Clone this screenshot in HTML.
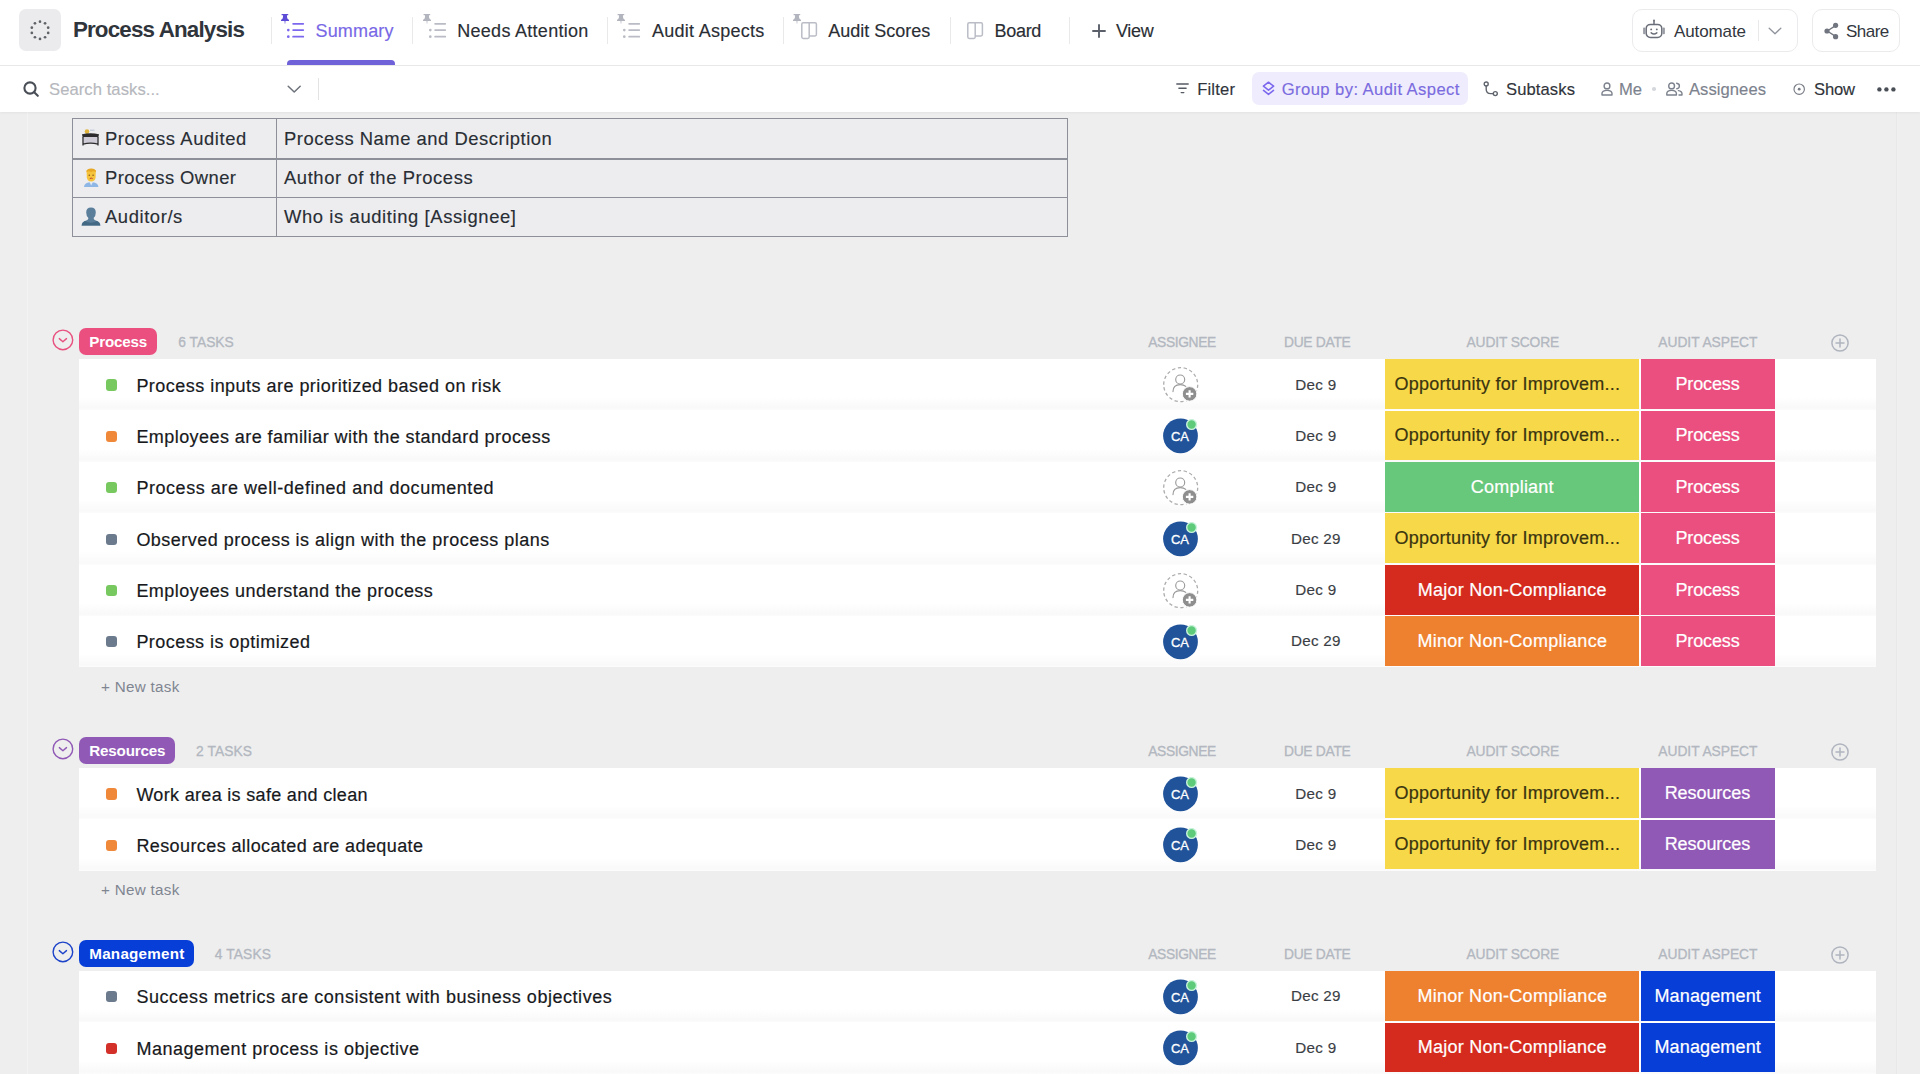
<!DOCTYPE html>
<html lang="en">
<head>
<meta charset="utf-8">
<title>Process Analysis</title>
<style>
*{box-sizing:border-box;margin:0;padding:0}
html,body{width:1920px;height:1074px;overflow:hidden;background:#eeeeee}
body{font-family:"Liberation Sans",Arial,sans-serif;color:#292d34;position:relative}
.abs{position:absolute}
svg{position:absolute;overflow:visible}
.t{position:absolute;white-space:nowrap;line-height:1}
#top{position:absolute;left:0;top:0;width:1920px;height:66px;background:#fff;border-bottom:1px solid #e9e9e9}
#bar{position:absolute;left:0;top:66px;width:1920px;height:45.6px;background:#fff;box-shadow:0 1px 2.5px rgba(0,0,0,.05)}
#lline{position:absolute;left:26.6px;top:112px;width:1.6px;height:962px;background:#f3f3f3}
#rline{position:absolute;left:1896.2px;top:112px;width:5px;height:962px;background:linear-gradient(90deg,#e8e8e8 0,#e8e8e8 1.2px,#f0f0f0 1.2px,#eee 100%)}
.title{font-size:22.4px;font-weight:700;color:#30343b}
.tab{font-size:18px;color:#2a2e34;-webkit-text-stroke:.15px}
.tab.on{color:#7868e6}
.btn{font-size:17px;color:#33373e}
.vsep{position:absolute;width:1px;background:#e9e9e9;top:17px;height:27px}
.tool{font-size:16.6px;color:#30343a;-webkit-text-stroke:.15px}
.tool.gr{color:#7c828d}
.tool.pl{color:#b6b8bd}
.tool.vi{color:#7a6be0}
.row{position:absolute;left:79px;width:1797px;height:51.4px;background:linear-gradient(#fff 0,#fff 74%,#f9f9f9 96%,#fcfcfc 100%)}
.sq{position:absolute;left:27.1px;top:20.4px;width:11px;height:11.2px;border-radius:3px}
.name{font-size:18px;color:#17191c;-webkit-text-stroke:.2px #17191c}
.date{font-size:15.2px;color:#3a3e44;-webkit-text-stroke:.15px}
.cell{position:absolute;top:.3px;height:49.8px}
.sc{left:1306.2px;width:254.1px}
.as{left:1561.8px;width:134.1px}
.ct{font-size:18px;color:#fff;-webkit-text-stroke:.2px}
.y .ct{color:#3a3410}
.y{background:#f6d848}
.g{background:#67c87b}
.r{background:#d52b1e}
.o{background:#ee8130}
.pk{background:#ea4f80}.pu{background:#9159b6}.bl{background:#083ed8}
.av{left:1083.6px;top:8.1px}
.ghead{font-size:13.8px;color:#b2b7c0;-webkit-text-stroke:.3px #b2b7c0}
.badge{position:absolute;left:79.2px;height:27px;border-radius:7px}
.bt{font-size:15.2px;font-weight:700;color:#fff}
.newt{font-size:15.2px;color:#7f8591}
#tbl{position:absolute;left:72.3px;top:118.2px;width:996.2px;height:118.8px;background:#ededf0;border:1.8px solid #8d9099}
#tbl .h{position:absolute;left:0;width:100%;height:1.8px;background:#8d9099}
#tbl .v{position:absolute;top:0;height:100%;width:1.8px;left:202.4px;background:#8d9099}
.tc{font-size:18.4px;color:#292d34;-webkit-text-stroke:.15px}
</style>
</head>
<body>
<div id="lline"></div><div id="rline"></div>
<div id="top">
<div class="abs" style="left:19px;top:9px;width:42px;height:42px;border-radius:7px;background:#ebebed"></div>
<svg style="left:0;top:0" width="80" height="60" fill="#5f6368"><circle cx="40.00" cy="21.70" r="1.35"/><circle cx="45.05" cy="23.34" r="1.35"/><circle cx="48.18" cy="27.64" r="1.35"/><circle cx="48.18" cy="32.96" r="1.35"/><circle cx="45.05" cy="37.26" r="1.35"/><circle cx="40.00" cy="38.90" r="1.35"/><circle cx="34.95" cy="37.26" r="1.35"/><circle cx="31.82" cy="32.96" r="1.35"/><circle cx="31.82" cy="27.64" r="1.35"/><circle cx="34.95" cy="23.34" r="1.35"/></svg>
<div class="t title" style="left:72.9px;top:19.3px;letter-spacing:-0.84px">Process Analysis</div>
<svg style="left:280.8px;top:14.3px" width="8" height="10" fill="#5b4bd6"><path d="M0.6 0 H7.2 V1.3 H5.9 L6.2 4.2 L8 6 V6.9 H4.5 L4.2 9.8 H3.8 L3.5 6.9 H0 V6 L1.8 4.2 L2.1 1.3 H0.6 Z"/></svg>
<svg style="left:287px;top:23.2px" width="20" height="16" fill="none" stroke="#7b68ee" stroke-width="1.7" stroke-linecap="round"><path d="M6.1 0.8 H16.3"/><path d="M6.1 7.1 H16.3"/><circle cx="1.3" cy="7.1" r="1.35" fill="#7b68ee" stroke="none"/><path d="M6.1 13.7 H16.3"/><circle cx="1.3" cy="13.7" r="1.35" fill="#7b68ee" stroke="none"/></svg>
<div class="t tab on" style="left:315.5px;top:21.8px;letter-spacing:0.16px">Summary</div>
<div class="abs" style="left:287px;top:60px;width:107.5px;height:5px;border-radius:4px 4px 0 0;background:#6f62d8"></div>
<div class="vsep" style="left:270.5px"></div>
<div class="vsep" style="left:412px"></div>
<div class="vsep" style="left:607px"></div>
<div class="vsep" style="left:783px"></div>
<div class="vsep" style="left:949.8px"></div>
<div class="vsep" style="left:1069px"></div>
<svg style="left:423px;top:14.3px" width="8" height="10" fill="#b2b4be"><path d="M0.6 0 H7.2 V1.3 H5.9 L6.2 4.2 L8 6 V6.9 H4.5 L4.2 9.8 H3.8 L3.5 6.9 H0 V6 L1.8 4.2 L2.1 1.3 H0.6 Z"/></svg>
<svg style="left:429px;top:23.2px" width="20" height="16" fill="none" stroke="#babcc5" stroke-width="1.7" stroke-linecap="round"><path d="M6.1 0.8 H16.3"/><path d="M6.1 7.1 H16.3"/><circle cx="1.3" cy="7.1" r="1.35" fill="#babcc5" stroke="none"/><path d="M6.1 13.7 H16.3"/><circle cx="1.3" cy="13.7" r="1.35" fill="#babcc5" stroke="none"/></svg>
<div class="t tab" style="left:457.2px;top:21.8px;letter-spacing:0.29px">Needs Attention</div>
<svg style="left:617px;top:14.3px" width="8" height="10" fill="#b2b4be"><path d="M0.6 0 H7.2 V1.3 H5.9 L6.2 4.2 L8 6 V6.9 H4.5 L4.2 9.8 H3.8 L3.5 6.9 H0 V6 L1.8 4.2 L2.1 1.3 H0.6 Z"/></svg>
<svg style="left:623px;top:23.2px" width="20" height="16" fill="none" stroke="#babcc5" stroke-width="1.7" stroke-linecap="round"><path d="M6.1 0.8 H16.3"/><path d="M6.1 7.1 H16.3"/><circle cx="1.3" cy="7.1" r="1.35" fill="#babcc5" stroke="none"/><path d="M6.1 13.7 H16.3"/><circle cx="1.3" cy="13.7" r="1.35" fill="#babcc5" stroke="none"/></svg>
<div class="t tab" style="left:652.0px;top:21.8px;letter-spacing:0.27px">Audit Aspects</div>
<svg style="left:793.2px;top:14.3px" width="8" height="10" fill="#b2b4be"><path d="M0.6 0 H7.2 V1.3 H5.9 L6.2 4.2 L8 6 V6.9 H4.5 L4.2 9.8 H3.8 L3.5 6.9 H0 V6 L1.8 4.2 L2.1 1.3 H0.6 Z"/></svg>
<svg style="left:800.5px;top:22.1px" width="17" height="17" fill="none" stroke="#bbbdc6" stroke-width="1.5" stroke-linejoin="round"><path d="M.8 2.2 a1.4 1.4 0 0 1 1.4 -1.4 H14 a1.4 1.4 0 0 1 1.4 1.4 V12.6 a1.4 1.4 0 0 1 -1.4 1.4 H8.2 V15 a1.4 1.4 0 0 1 -1.4 1.4 H2.2 a1.4 1.4 0 0 1 -1.4 -1.4 Z M8.2 .8 V14"/></svg>
<div class="t tab" style="left:828.2px;top:21.8px;letter-spacing:0.00px">Audit Scores</div>
<svg style="left:966.6px;top:22.1px" width="17" height="17" fill="none" stroke="#bbbdc6" stroke-width="1.5" stroke-linejoin="round"><path d="M.8 2.2 a1.4 1.4 0 0 1 1.4 -1.4 H14 a1.4 1.4 0 0 1 1.4 1.4 V12.6 a1.4 1.4 0 0 1 -1.4 1.4 H8.2 V15 a1.4 1.4 0 0 1 -1.4 1.4 H2.2 a1.4 1.4 0 0 1 -1.4 -1.4 Z M8.2 .8 V14"/></svg>
<div class="t tab" style="left:994.5px;top:21.8px;letter-spacing:-0.29px">Board</div>
<svg style="left:1092.3px;top:23.6px" width="14" height="14" stroke="#5a5f69" stroke-width="1.9" stroke-linecap="round"><path d="M7 1 V13 M1 7 H13"/></svg>
<div class="t tab" style="left:1115.9px;top:21.8px;letter-spacing:-0.27px">View</div>
<div class="abs" style="left:1631.5px;top:9px;width:166.5px;height:43px;border:1px solid #ebebee;border-radius:10px"></div>
<svg style="left:1642px;top:18px" width="24" height="24" fill="none" stroke="#6a6e78" stroke-width="1.5" stroke-linecap="round" stroke-linejoin="round"><rect x="4.2" y="6.4" width="15.6" height="13" rx="4.2"/><path d="M12 6.2 V3.4"/><circle cx="12" cy="2.5" r="1" fill="#6a6e78" stroke="none"/><rect x="1.1" y="9.6" width="2.2" height="6.6" rx=".8" fill="#9a9da5" stroke="none"/><rect x="20.7" y="9.6" width="2.2" height="6.6" rx=".8" fill="#9a9da5" stroke="none"/><circle cx="9.2" cy="11.4" r=".95" fill="#6a6e78" stroke="none"/><circle cx="14.8" cy="11.4" r=".95" fill="#6a6e78" stroke="none"/><path d="M9.2 14.8 Q12 17 14.8 14.8"/></svg>
<div class="t btn" style="left:1674.0px;top:22.6px;letter-spacing:-0.11px">Automate</div>
<div class="abs" style="left:1758.2px;top:20px;width:1px;height:21px;background:#e9e9ec"></div>
<svg style="left:1768px;top:26.8px" width="14" height="9" fill="none" stroke="#8f939c" stroke-width="1.3" stroke-linecap="round" stroke-linejoin="round"><path d="M1.2 1.2 L7 6.8 L12.8 1.2"/></svg>
<div class="abs" style="left:1812px;top:9px;width:88px;height:43px;border:1px solid #ebebee;border-radius:10px"></div>
<svg style="left:1823.5px;top:21.5px" width="16" height="18" fill="#71757f" stroke="#71757f" stroke-width="1.4"><path d="M3.2 9 L11.6 3.6 M3.2 9 L11.6 14.4" fill="none"/><circle cx="3" cy="9" r="2.6" stroke="none"/><circle cx="11.6" cy="3.3" r="2.6" stroke="none"/><circle cx="11.6" cy="14.7" r="2.6" stroke="none"/></svg>
<div class="t btn" style="left:1846.0px;top:22.6px;letter-spacing:-0.52px">Share</div>
</div>
<div id="bar"></div>
<svg style="left:23px;top:80.5px" width="17" height="17" fill="none" stroke="#4a4f57" stroke-width="2.1" stroke-linecap="round"><circle cx="7" cy="7" r="5.6"/><path d="M11.2 11.2 L14.8 14.8"/></svg>
<div class="t tool pl" style="left:49.0px;top:81.9px;letter-spacing:0.07px">Search tasks...</div>
<svg style="left:287px;top:84.5px" width="15" height="9" fill="none" stroke="#6d727b" stroke-width="1.5" stroke-linecap="round" stroke-linejoin="round"><path d="M1.2 1.2 L7.2 7 L13.2 1.2"/></svg>
<div class="abs" style="left:317.5px;top:78px;width:1px;height:22px;background:#e3e3e3"></div>
<svg style="left:1175.5px;top:83.2px" width="13" height="11" fill="none" stroke="#555a63" stroke-width="1.4" stroke-linecap="round"><path d="M.8 1 H12.2 M2.9 5.3 H10.1 M5.2 9.6 H7.8"/></svg>
<div class="t tool" style="left:1197.2px;top:81.9px;letter-spacing:0.17px">Filter</div>
<div class="abs" style="left:1251.5px;top:72.3px;width:216.5px;height:32.3px;border-radius:7px;background:#efedfd"></div>
<svg style="left:1261.5px;top:81px" width="13" height="15" fill="none" stroke="#7b68ee" stroke-width="1.55" stroke-linejoin="round" stroke-linecap="round"><path d="M6.5 1.2 L11.6 5.2 L6.5 9.2 L1.4 5.2 Z"/><path d="M1.5 9.4 L6.5 13.4 L11.5 9.4"/></svg>
<div class="t tool vi" style="left:1281.8px;top:81.9px;letter-spacing:0.42px">Group by: Audit Aspect</div>
<svg style="left:1483px;top:81px" width="16" height="16" fill="none" stroke="#5f646d" stroke-width="1.4" stroke-linecap="round"><circle cx="3.2" cy="3" r="2"/><circle cx="12.3" cy="12.6" r="2"/><path d="M3.2 5 V8.2 Q3.2 12.6 7.6 12.6 H10.3"/></svg>
<div class="t tool" style="left:1506.0px;top:81.9px;letter-spacing:0.10px">Subtasks</div>
<svg style="left:1600.5px;top:81.5px" width="12" height="14" fill="none" stroke="#7c828d" stroke-width="1.4" stroke-linejoin="round"><circle cx="6" cy="3.9" r="2.9"/><path d="M1 13 V11.6 Q1 8.4 6 8.4 Q11 8.4 11 11.6 V13 Z"/></svg>
<div class="t tool gr" style="left:1619.0px;top:81.9px;letter-spacing:-0.06px">Me</div>
<div class="abs" style="left:1652.3px;top:87px;width:3.6px;height:3.6px;border-radius:50%;background:#d5d8dd"></div>
<svg style="left:1665.5px;top:81.5px" width="17" height="14" fill="none" stroke="#7c828d" stroke-width="1.4" stroke-linejoin="round" stroke-linecap="round"><circle cx="5.6" cy="3.9" r="2.9"/><path d="M.8 13 V11.6 Q.8 8.4 5.6 8.4 Q10.4 8.4 10.4 11.6 V13 Z"/><path d="M10.6 1.2 Q13.4 1.6 13.4 3.9 Q13.4 6.2 10.8 6.7"/><path d="M12.4 8.6 Q16 9.2 16 11.8 V13 H13"/></svg>
<div class="t tool gr" style="left:1689.0px;top:81.9px;letter-spacing:0.05px">Assignees</div>
<svg style="left:1793.4px;top:83px" width="13" height="13" fill="none" stroke="#777c85" stroke-width="1.15"><circle cx="6.2" cy="6.2" r="5.2"/><circle cx="6.2" cy="6.2" r="1.4" fill="#777c85" stroke="none"/></svg>
<div class="t tool" style="left:1814.0px;top:81.9px;letter-spacing:-0.17px">Show</div>
<svg style="left:1877px;top:86.5px" width="19" height="5" fill="#4a4f57"><circle cx="2.4" cy="2.4" r="2.2"/><circle cx="9.4" cy="2.4" r="2.2"/><circle cx="16.4" cy="2.4" r="2.2"/></svg>
<div id="tbl"><div class="h" style="top:38.6px"></div><div class="h" style="top:77.4px"></div><div class="v"></div></div>
<svg style="left:81px;top:128.3px" width="19" height="19"><circle cx="6" cy="3.6" r="2.3" fill="#e0b43c"/><path d="M9 2.2 H13.5" stroke="#b7c3d6" stroke-width="1"/><path d="M1 6.2 Q9.5 4.4 18 6.2 L17.4 9.2 H1.6 Z" fill="#2c2c2e"/><path d="M2.6 9 H16.4 V16 Q9.5 14.2 2.6 16 Z" fill="#cfcbd6"/><path d="M2 9 V17.4 M17 9 V17.4 M2 16.2 Q9.5 14.2 17 16.2" stroke="#2c2c2e" stroke-width="1.3" fill="none"/></svg>
<div class="t tc" style="left:105.0px;top:129.7px;letter-spacing:0.60px">Process Audited</div>
<div class="t tc" style="left:284.0px;top:129.7px;letter-spacing:0.53px">Process Name and Description</div>
<svg style="left:82.5px;top:167.7px" width="17" height="20"><path d="M1 19 Q1 14.2 8.2 14.2 Q15.4 14.2 15.4 19 Z" fill="#8fb7e6"/><path d="M6.6 14 L8.2 17.4 L9.8 14 Z" fill="#e9edf2"/><path d="M3.6 2.2 Q8.2 -0.4 12.8 2.2 L12.6 9.2 Q12 13.6 8.2 13.6 Q4.4 13.6 3.8 9.2 Z" fill="#f5c33c"/><path d="M3.4 4.2 Q3.4 0.6 8.2 0.6 Q13 0.6 13 4.2 Q10.8 2.6 8.2 4 Q5.6 2.6 3.4 4.2 Z" fill="#e8a824"/><circle cx="6.3" cy="7.2" r=".8" fill="#8a5a1e"/><circle cx="10.1" cy="7.2" r=".8" fill="#8a5a1e"/><path d="M6.8 10.6 Q8.2 9.6 9.6 10.6" stroke="#c2412d" stroke-width="1" fill="none"/></svg>
<div class="t tc" style="left:105.0px;top:169.1px;letter-spacing:0.44px">Process Owner</div>
<div class="t tc" style="left:284.0px;top:169.1px;letter-spacing:0.59px">Author of the Process</div>
<svg style="left:80.5px;top:206.7px" width="20" height="19"><path d="M.6 18.6 Q.8 14.4 5.2 13.4 Q7.6 12.8 7.4 11 Q5.2 9.2 5.2 5.6 Q5.2 .6 10 .6 Q14.8 .6 14.8 5.6 Q14.8 9.2 12.6 11 Q12.4 12.8 14.8 13.4 Q19.2 14.4 19.4 18.6 Z" fill="#5b7f9b"/><path d="M.6 18.6 Q.8 15.6 4 14 Q10 17.4 16 14 Q19.2 15.6 19.4 18.6 Z" fill="#436884"/></svg>
<div class="t tc" style="left:105.0px;top:208.1px;letter-spacing:0.59px">Auditor/s</div>
<div class="t tc" style="left:284.0px;top:208.1px;letter-spacing:0.61px">Who is auditing [Assignee]</div>
<!-- group: Process -->
<svg style="left:51.8px;top:329px" width="22" height="22" fill="none" stroke="#e8517f" stroke-width="1.4" stroke-linecap="round" stroke-linejoin="round"><circle cx="10.9" cy="10.9" r="9.8"/><path d="M7.3 9.6 L10.9 12.7 L14.5 9.6"/></svg>
<div class="badge pk" style="top:327.8px;width:77.8px"></div>
<div class="t bt" style="left:89.3px;top:333.7px;letter-spacing:-0.18px">Process</div>
<div class="t ghead" style="left:178.3px;top:335.8px;letter-spacing:0.00px">6 TASKS</div>
<div class="t ghead" style="left:1148.3px;top:335.8px;letter-spacing:-0.38px">ASSIGNEE</div>
<div class="t ghead" style="left:1284.0px;top:335.8px;letter-spacing:-0.28px">DUE DATE</div>
<div class="t ghead" style="left:1466.5px;top:335.8px;letter-spacing:-0.13px">AUDIT SCORE</div>
<div class="t ghead" style="left:1658.3px;top:335.8px;letter-spacing:-0.02px">AUDIT ASPECT</div>
<svg style="left:1830.5px;top:333.7px" width="18" height="18" fill="none" stroke="#afb4be" stroke-width="1.5" stroke-linecap="round"><circle cx="9" cy="9" r="8.1"/><path d="M9 5 V13 M5 9 H13"/></svg>
<div class="row" style="top:359.00px"><div class="sq" style="background:#78c860"></div><div class="t name" style="left:57.4px;top:17.6px;letter-spacing:0.47px">Process inputs are prioritized based on risk</div><svg class="av" width="36" height="36" fill="none"><circle cx="17.7" cy="17.7" r="17" stroke="#adadad" stroke-width="1.3" stroke-dasharray="3.3 2.6"/><circle cx="17.2" cy="12.5" r="4.5" stroke="#9a9a9a" stroke-width="1.15"/><path d="M10 24.6 Q10 17.6 17.2 17.6 Q20.8 17.6 22.8 19.4" stroke="#9a9a9a" stroke-width="1.15" stroke-linecap="round"/><circle cx="26.6" cy="26.9" r="7.3" fill="#8e8e8e" stroke="#fff" stroke-width="1"/><path d="M26.6 23.2 V30.6 M22.9 26.9 H30.3" stroke="#fff" stroke-width="2.1"/></svg><div class="t date" style="left:1216.3px;top:17.6px;letter-spacing:0.33px">Dec 9</div><div class="cell sc y"><div class="t ct" style="left:9.4px;top:15.8px;letter-spacing:0.24px">Opportunity for Improvem...</div></div><div class="cell as pk"><div class="t ct" style="left:34.6px;top:15.8px;letter-spacing:-0.11px">Process</div></div></div>
<div class="row" style="top:410.38px"><div class="sq" style="background:#f0883a"></div><div class="t name" style="left:57.4px;top:17.6px;letter-spacing:0.44px">Employees are familiar with the standard process</div><svg class="av" width="36" height="36"><circle cx="17.5" cy="17.8" r="17.4" fill="#20539a"/><text x="17" y="22.7" text-anchor="middle" font-family="Liberation Sans, Arial, sans-serif" font-size="13" fill="#fff" stroke="#fff" stroke-width=".3">CA</text><circle cx="28.6" cy="6.5" r="4.9" fill="#5ecb7b" stroke="#c9f3dc" stroke-width="1.4"/></svg><div class="t date" style="left:1216.3px;top:17.6px;letter-spacing:0.33px">Dec 9</div><div class="cell sc y"><div class="t ct" style="left:9.4px;top:15.8px;letter-spacing:0.24px">Opportunity for Improvem...</div></div><div class="cell as pk"><div class="t ct" style="left:34.6px;top:15.8px;letter-spacing:-0.11px">Process</div></div></div>
<div class="row" style="top:461.76px"><div class="sq" style="background:#78c860"></div><div class="t name" style="left:57.4px;top:17.6px;letter-spacing:0.55px">Process are well-defined and documented</div><svg class="av" width="36" height="36" fill="none"><circle cx="17.7" cy="17.7" r="17" stroke="#adadad" stroke-width="1.3" stroke-dasharray="3.3 2.6"/><circle cx="17.2" cy="12.5" r="4.5" stroke="#9a9a9a" stroke-width="1.15"/><path d="M10 24.6 Q10 17.6 17.2 17.6 Q20.8 17.6 22.8 19.4" stroke="#9a9a9a" stroke-width="1.15" stroke-linecap="round"/><circle cx="26.6" cy="26.9" r="7.3" fill="#8e8e8e" stroke="#fff" stroke-width="1"/><path d="M26.6 23.2 V30.6 M22.9 26.9 H30.3" stroke="#fff" stroke-width="2.1"/></svg><div class="t date" style="left:1216.3px;top:17.6px;letter-spacing:0.33px">Dec 9</div><div class="cell sc g"><div class="t ct" style="left:85.6px;top:15.8px;letter-spacing:0.22px">Compliant</div></div><div class="cell as pk"><div class="t ct" style="left:34.6px;top:15.8px;letter-spacing:-0.11px">Process</div></div></div>
<div class="row" style="top:513.14px"><div class="sq" style="background:#6b7a8c"></div><div class="t name" style="left:57.4px;top:17.6px;letter-spacing:0.48px">Observed process is align with the process plans</div><svg class="av" width="36" height="36"><circle cx="17.5" cy="17.8" r="17.4" fill="#20539a"/><text x="17" y="22.7" text-anchor="middle" font-family="Liberation Sans, Arial, sans-serif" font-size="13" fill="#fff" stroke="#fff" stroke-width=".3">CA</text><circle cx="28.6" cy="6.5" r="4.9" fill="#5ecb7b" stroke="#c9f3dc" stroke-width="1.4"/></svg><div class="t date" style="left:1212.0px;top:17.6px;letter-spacing:0.28px">Dec 29</div><div class="cell sc y"><div class="t ct" style="left:9.4px;top:15.8px;letter-spacing:0.24px">Opportunity for Improvem...</div></div><div class="cell as pk"><div class="t ct" style="left:34.6px;top:15.8px;letter-spacing:-0.11px">Process</div></div></div>
<div class="row" style="top:564.52px"><div class="sq" style="background:#78c860"></div><div class="t name" style="left:57.4px;top:17.6px;letter-spacing:0.46px">Employees understand the process</div><svg class="av" width="36" height="36" fill="none"><circle cx="17.7" cy="17.7" r="17" stroke="#adadad" stroke-width="1.3" stroke-dasharray="3.3 2.6"/><circle cx="17.2" cy="12.5" r="4.5" stroke="#9a9a9a" stroke-width="1.15"/><path d="M10 24.6 Q10 17.6 17.2 17.6 Q20.8 17.6 22.8 19.4" stroke="#9a9a9a" stroke-width="1.15" stroke-linecap="round"/><circle cx="26.6" cy="26.9" r="7.3" fill="#8e8e8e" stroke="#fff" stroke-width="1"/><path d="M26.6 23.2 V30.6 M22.9 26.9 H30.3" stroke="#fff" stroke-width="2.1"/></svg><div class="t date" style="left:1216.3px;top:17.6px;letter-spacing:0.33px">Dec 9</div><div class="cell sc r"><div class="t ct" style="left:32.6px;top:15.8px;letter-spacing:0.25px">Major Non-Compliance</div></div><div class="cell as pk"><div class="t ct" style="left:34.6px;top:15.8px;letter-spacing:-0.11px">Process</div></div></div>
<div class="row" style="top:615.90px"><div class="sq" style="background:#6b7a8c"></div><div class="t name" style="left:57.4px;top:17.6px;letter-spacing:0.45px">Process is optimized</div><svg class="av" width="36" height="36"><circle cx="17.5" cy="17.8" r="17.4" fill="#20539a"/><text x="17" y="22.7" text-anchor="middle" font-family="Liberation Sans, Arial, sans-serif" font-size="13" fill="#fff" stroke="#fff" stroke-width=".3">CA</text><circle cx="28.6" cy="6.5" r="4.9" fill="#5ecb7b" stroke="#c9f3dc" stroke-width="1.4"/></svg><div class="t date" style="left:1212.0px;top:17.6px;letter-spacing:0.28px">Dec 29</div><div class="cell sc o"><div class="t ct" style="left:32.2px;top:15.8px;letter-spacing:0.29px">Minor Non-Compliance</div></div><div class="cell as pk"><div class="t ct" style="left:34.6px;top:15.8px;letter-spacing:-0.11px">Process</div></div></div>
<div class="t newt" style="left:101.0px;top:678.8px;letter-spacing:0.31px">+ New task</div>
<!-- group: Resources -->
<svg style="left:51.8px;top:738px" width="22" height="22" fill="none" stroke="#9159b6" stroke-width="1.4" stroke-linecap="round" stroke-linejoin="round"><circle cx="10.9" cy="10.9" r="9.8"/><path d="M7.3 9.6 L10.9 12.7 L14.5 9.6"/></svg>
<div class="badge pu" style="top:736.8px;width:96px"></div>
<div class="t bt" style="left:89.3px;top:742.7px;letter-spacing:-0.18px">Resources</div>
<div class="t ghead" style="left:196.0px;top:744.8px;letter-spacing:0.09px">2 TASKS</div>
<div class="t ghead" style="left:1148.3px;top:744.8px;letter-spacing:-0.38px">ASSIGNEE</div>
<div class="t ghead" style="left:1284.0px;top:744.8px;letter-spacing:-0.28px">DUE DATE</div>
<div class="t ghead" style="left:1466.5px;top:744.8px;letter-spacing:-0.13px">AUDIT SCORE</div>
<div class="t ghead" style="left:1658.3px;top:744.8px;letter-spacing:-0.02px">AUDIT ASPECT</div>
<svg style="left:1830.5px;top:742.7px" width="18" height="18" fill="none" stroke="#afb4be" stroke-width="1.5" stroke-linecap="round"><circle cx="9" cy="9" r="8.1"/><path d="M9 5 V13 M5 9 H13"/></svg>
<div class="row" style="top:768.00px"><div class="sq" style="background:#f0883a"></div><div class="t name" style="left:57.4px;top:17.6px;letter-spacing:0.32px">Work area is safe and clean</div><svg class="av" width="36" height="36"><circle cx="17.5" cy="17.8" r="17.4" fill="#20539a"/><text x="17" y="22.7" text-anchor="middle" font-family="Liberation Sans, Arial, sans-serif" font-size="13" fill="#fff" stroke="#fff" stroke-width=".3">CA</text><circle cx="28.6" cy="6.5" r="4.9" fill="#5ecb7b" stroke="#c9f3dc" stroke-width="1.4"/></svg><div class="t date" style="left:1216.3px;top:17.6px;letter-spacing:0.33px">Dec 9</div><div class="cell sc y"><div class="t ct" style="left:9.4px;top:15.8px;letter-spacing:0.24px">Opportunity for Improvem...</div></div><div class="cell as pu"><div class="t ct" style="left:23.9px;top:15.8px;letter-spacing:-0.07px">Resources</div></div></div>
<div class="row" style="top:819.38px"><div class="sq" style="background:#f0883a"></div><div class="t name" style="left:57.4px;top:17.6px;letter-spacing:0.40px">Resources allocated are adequate</div><svg class="av" width="36" height="36"><circle cx="17.5" cy="17.8" r="17.4" fill="#20539a"/><text x="17" y="22.7" text-anchor="middle" font-family="Liberation Sans, Arial, sans-serif" font-size="13" fill="#fff" stroke="#fff" stroke-width=".3">CA</text><circle cx="28.6" cy="6.5" r="4.9" fill="#5ecb7b" stroke="#c9f3dc" stroke-width="1.4"/></svg><div class="t date" style="left:1216.3px;top:17.6px;letter-spacing:0.33px">Dec 9</div><div class="cell sc y"><div class="t ct" style="left:9.4px;top:15.8px;letter-spacing:0.24px">Opportunity for Improvem...</div></div><div class="cell as pu"><div class="t ct" style="left:23.9px;top:15.8px;letter-spacing:-0.07px">Resources</div></div></div>
<div class="t newt" style="left:101.0px;top:882.3px;letter-spacing:0.31px">+ New task</div>
<!-- group: Management -->
<svg style="left:51.8px;top:940.9px" width="22" height="22" fill="none" stroke="#1d43c9" stroke-width="1.4" stroke-linecap="round" stroke-linejoin="round"><circle cx="10.9" cy="10.9" r="9.8"/><path d="M7.3 9.6 L10.9 12.7 L14.5 9.6"/></svg>
<div class="badge bl" style="top:939.7px;width:114.8px"></div>
<div class="t bt" style="left:89.3px;top:945.6px;letter-spacing:0.24px">Management</div>
<div class="t ghead" style="left:214.7px;top:947.7px;letter-spacing:0.14px">4 TASKS</div>
<div class="t ghead" style="left:1148.3px;top:947.7px;letter-spacing:-0.38px">ASSIGNEE</div>
<div class="t ghead" style="left:1284.0px;top:947.7px;letter-spacing:-0.28px">DUE DATE</div>
<div class="t ghead" style="left:1466.5px;top:947.7px;letter-spacing:-0.13px">AUDIT SCORE</div>
<div class="t ghead" style="left:1658.3px;top:947.7px;letter-spacing:-0.02px">AUDIT ASPECT</div>
<svg style="left:1830.5px;top:945.6px" width="18" height="18" fill="none" stroke="#afb4be" stroke-width="1.5" stroke-linecap="round"><circle cx="9" cy="9" r="8.1"/><path d="M9 5 V13 M5 9 H13"/></svg>
<div class="row" style="top:970.90px"><div class="sq" style="background:#6b7a8c"></div><div class="t name" style="left:57.4px;top:17.6px;letter-spacing:0.54px">Success metrics are consistent with business objectives</div><svg class="av" width="36" height="36"><circle cx="17.5" cy="17.8" r="17.4" fill="#20539a"/><text x="17" y="22.7" text-anchor="middle" font-family="Liberation Sans, Arial, sans-serif" font-size="13" fill="#fff" stroke="#fff" stroke-width=".3">CA</text><circle cx="28.6" cy="6.5" r="4.9" fill="#5ecb7b" stroke="#c9f3dc" stroke-width="1.4"/></svg><div class="t date" style="left:1212.0px;top:17.6px;letter-spacing:0.28px">Dec 29</div><div class="cell sc o"><div class="t ct" style="left:32.2px;top:15.8px;letter-spacing:0.29px">Minor Non-Compliance</div></div><div class="cell as bl"><div class="t ct" style="left:13.7px;top:15.8px;letter-spacing:0.14px">Management</div></div></div>
<div class="row" style="top:1022.28px"><div class="sq" style="background:#d3302a"></div><div class="t name" style="left:57.4px;top:17.6px;letter-spacing:0.52px">Management process is objective</div><svg class="av" width="36" height="36"><circle cx="17.5" cy="17.8" r="17.4" fill="#20539a"/><text x="17" y="22.7" text-anchor="middle" font-family="Liberation Sans, Arial, sans-serif" font-size="13" fill="#fff" stroke="#fff" stroke-width=".3">CA</text><circle cx="28.6" cy="6.5" r="4.9" fill="#5ecb7b" stroke="#c9f3dc" stroke-width="1.4"/></svg><div class="t date" style="left:1216.3px;top:17.6px;letter-spacing:0.33px">Dec 9</div><div class="cell sc r"><div class="t ct" style="left:32.6px;top:15.8px;letter-spacing:0.25px">Major Non-Compliance</div></div><div class="cell as bl"><div class="t ct" style="left:13.7px;top:15.8px;letter-spacing:0.14px">Management</div></div></div>
</body>
</html>
